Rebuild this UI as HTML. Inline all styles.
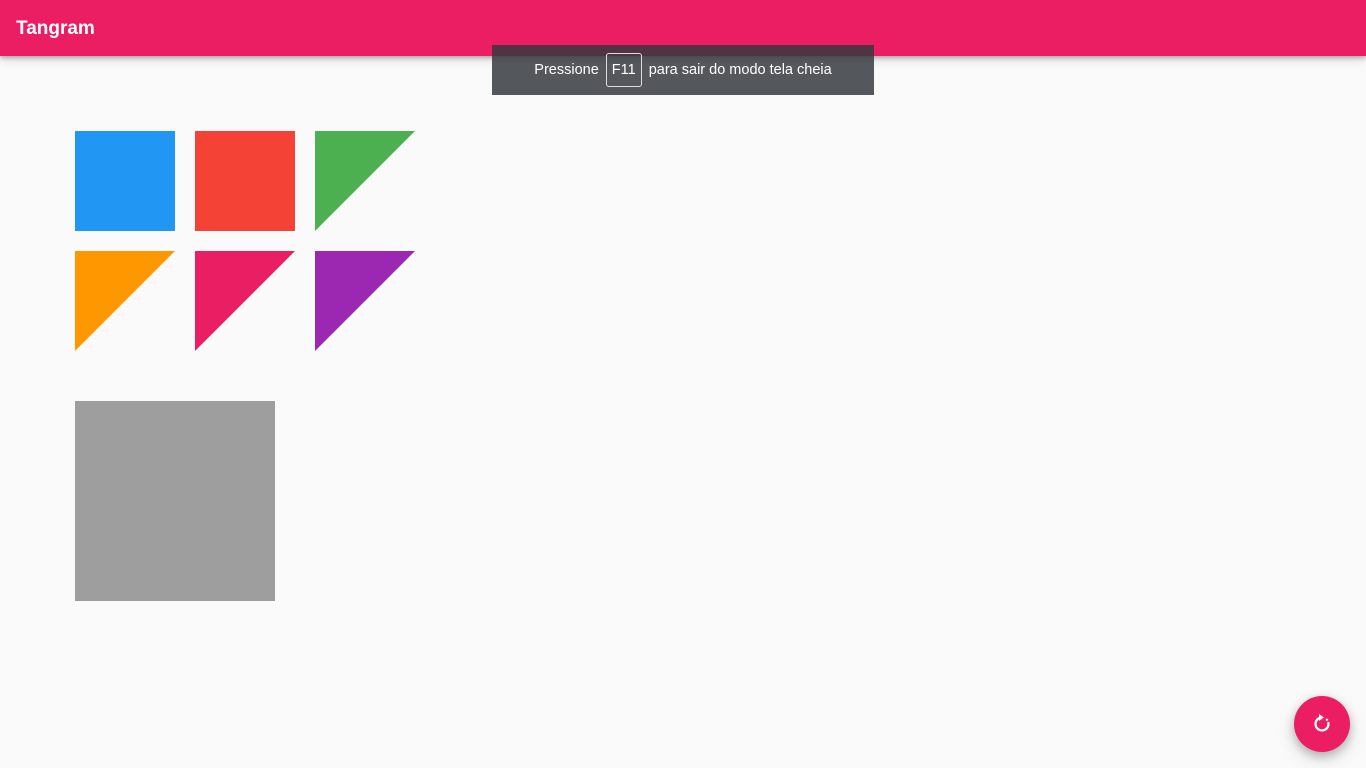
<!DOCTYPE html>
<html><head><meta charset="utf-8"><style>
html,body{margin:0;padding:0;width:1366px;height:768px;overflow:hidden;background:#fafafa;font-family:"Liberation Sans",sans-serif;position:relative}
.hdr{position:absolute;left:0;top:0;width:1366px;height:56px;background:#ec1e63;box-shadow:0 2px 4px rgba(0,0,0,.25),0 4px 10px rgba(0,0,0,.12)}
.hdr span{position:absolute;left:16px;top:18px;color:#fff;font-weight:bold;font-size:19px}
.toast{position:absolute;left:492px;top:45px;width:382px;height:50px;background:rgba(50,55,60,.83);color:#fff;font-size:14.5px;display:flex;align-items:center;justify-content:center}
.key{display:inline-block;border:1px solid #ddd;border-radius:3px;padding:0 5px;height:32px;line-height:32px;margin:0 7px}
.s{position:absolute;width:100px;height:100px}
.fab{position:absolute;left:1294px;top:696px;width:56px;height:56px;border-radius:50%;background:#ec1e63;box-shadow:0 4px 10px rgba(0,0,0,.25),0 8px 20px rgba(0,0,0,.1)}
</style></head><body>
<div class="hdr"><span>Tangram</span></div>
<div class="s" style="left:75px;top:131px;background:#2196f3"></div>
<div class="s" style="left:195px;top:131px;background:#f44336"></div>
<svg class="s" style="left:315px;top:131px"><polygon points="0,0 100,0 0,100" fill="#4caf50"/></svg>
<svg class="s" style="left:75px;top:251px"><polygon points="0,0 100,0 0,100" fill="#ff9800"/></svg>
<svg class="s" style="left:195px;top:251px"><polygon points="0,0 100,0 0,100" fill="#e91e63"/></svg>
<svg class="s" style="left:315px;top:251px"><polygon points="0,0 100,0 0,100" fill="#9c27b0"/></svg>
<div style="position:absolute;left:75px;top:401px;width:200px;height:200px;background:#9e9e9e"></div>
<div class="toast">Pressione<span class="key">F11</span>para sair do modo tela cheia</div>
<div class="fab"><svg width="56" height="56" viewBox="0 0 56 56">
<path d="M27 21.5 A6.5 6.5 0 1 0 34.5 28" fill="none" stroke="#fff" stroke-width="2.2"/>
<path d="M34.5 28 A6.5 6.5 0 0 0 31 22.3" fill="none" stroke="#fff" stroke-width="2.2" stroke-dasharray="2 1.5"/>
<polygon points="25,18 30,21.5 25,25" fill="#fff"/>
</svg></div>
</body></html>
